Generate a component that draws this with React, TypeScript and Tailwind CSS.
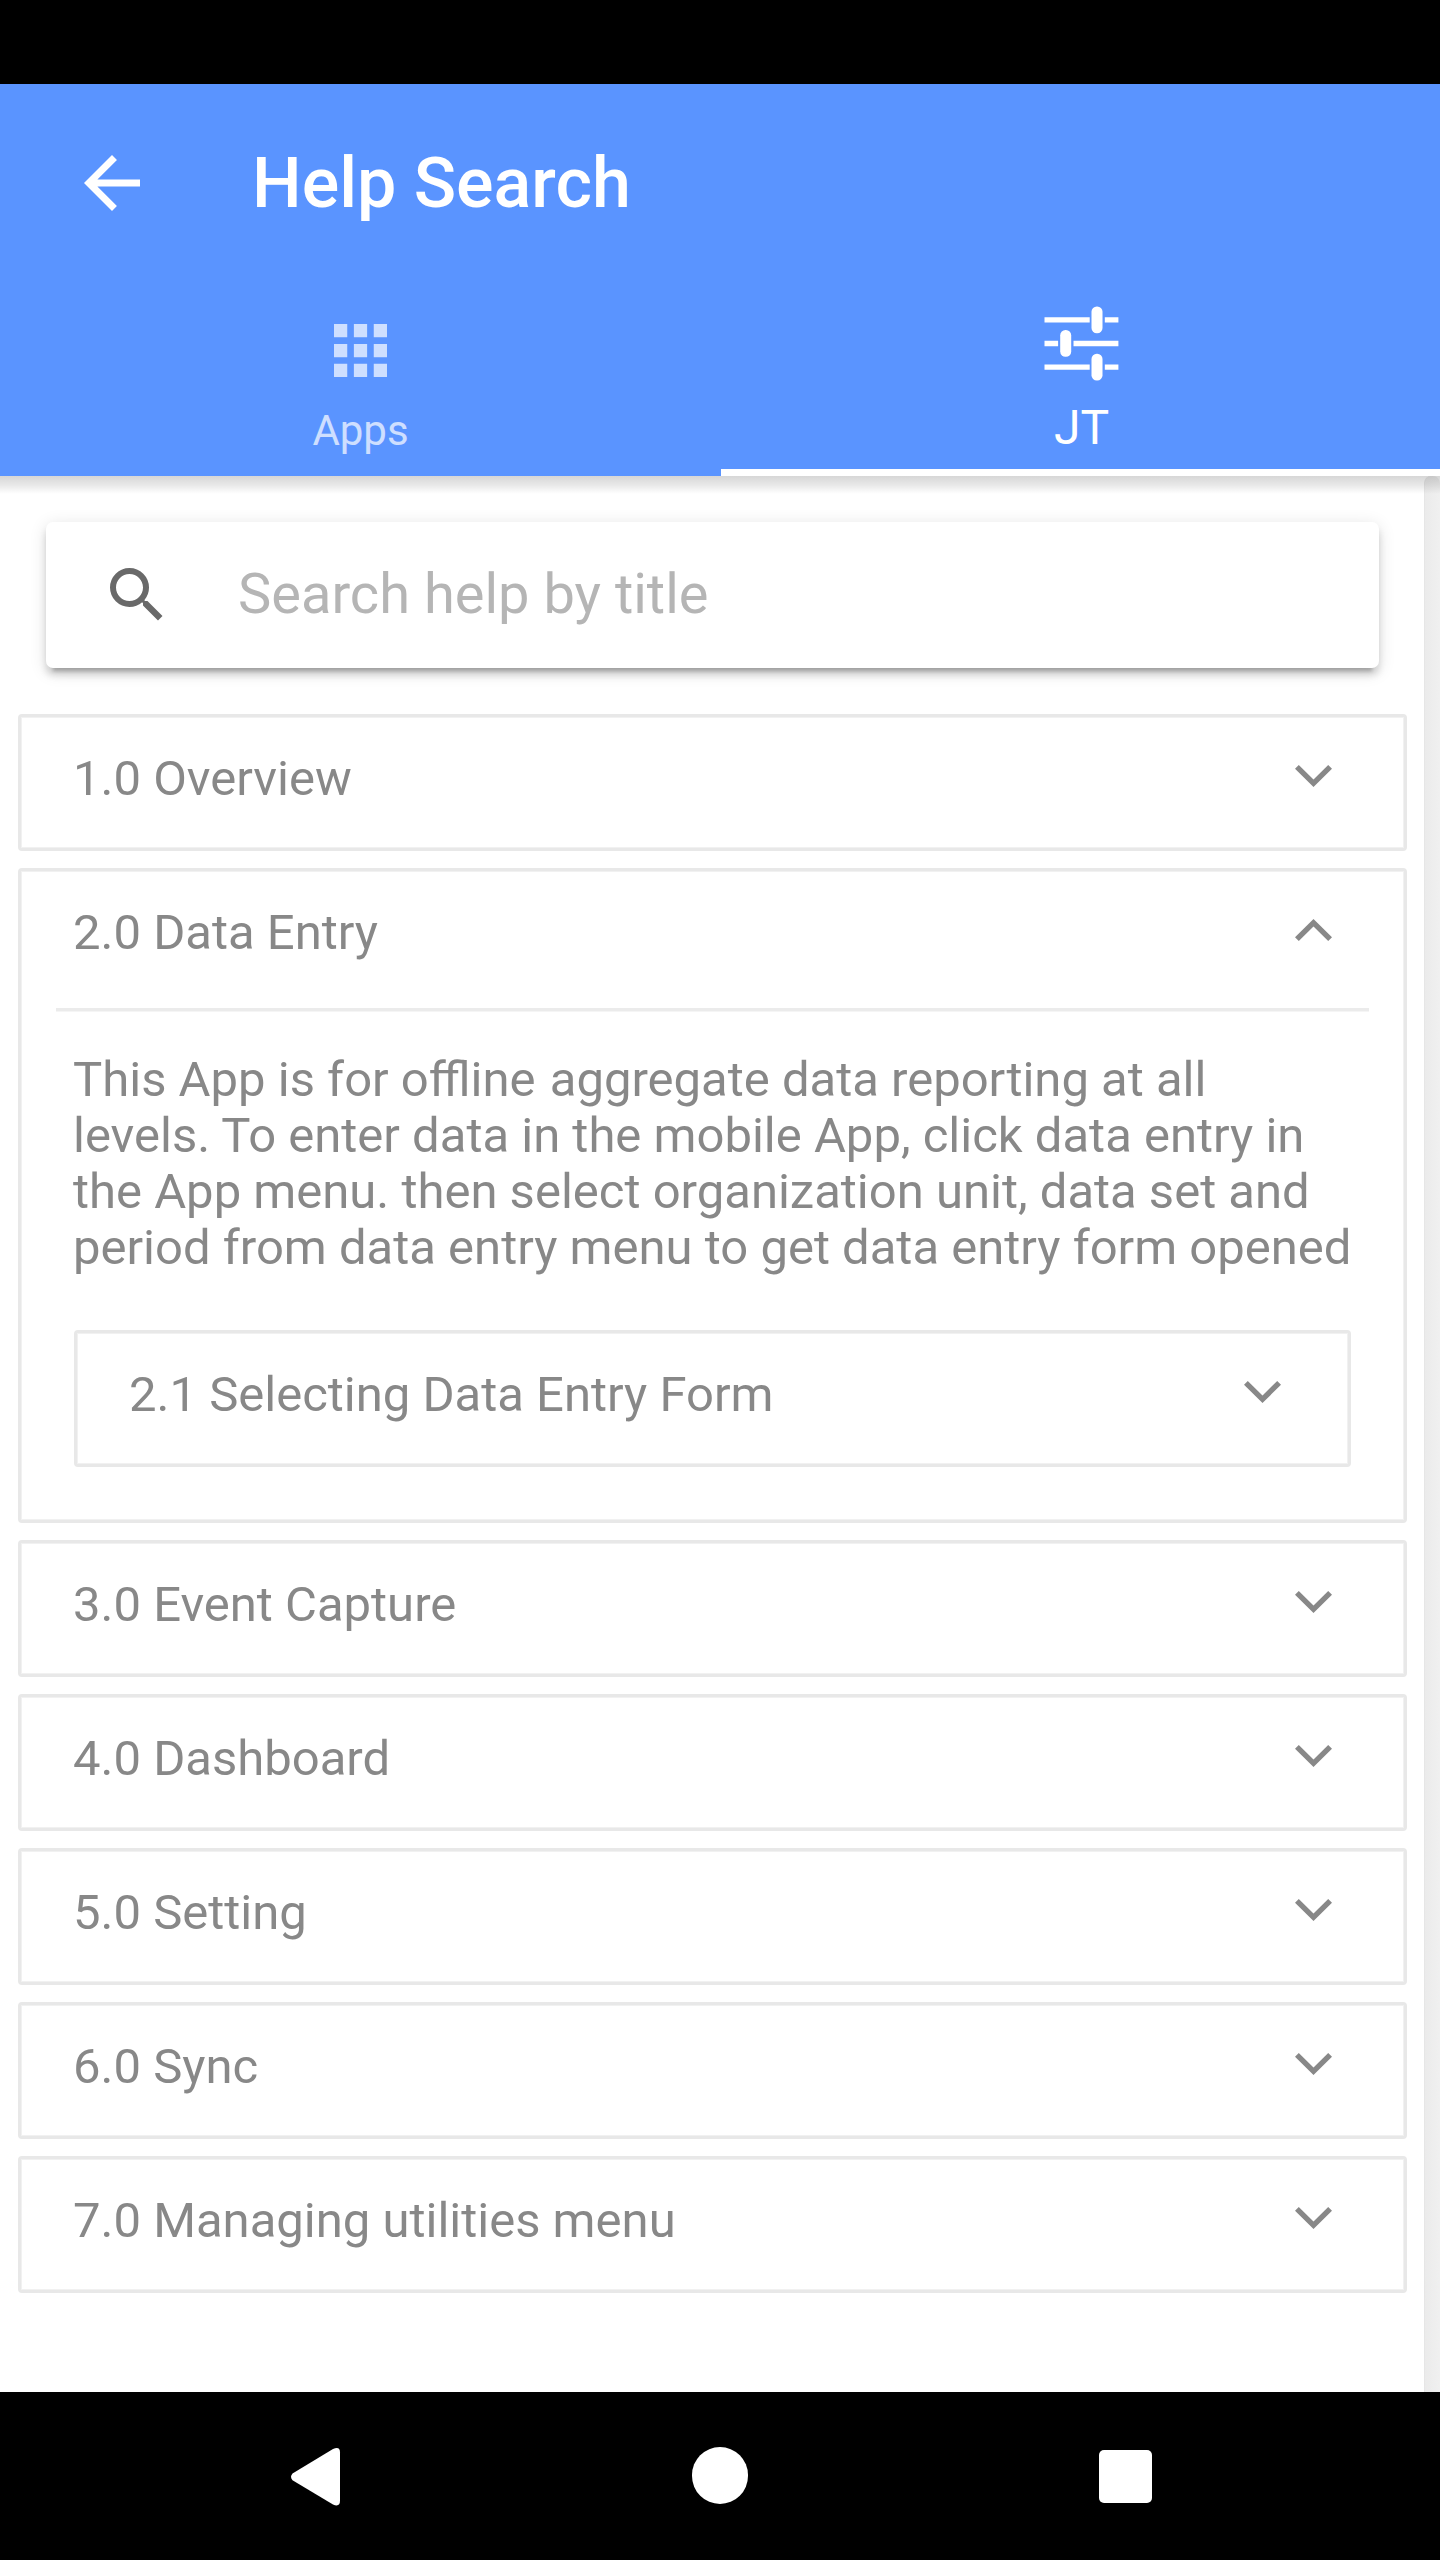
import type { ReactNode } from "react";

function Chevron({ open }: { open?: boolean }) {
  return (
    <svg className="mt-[48px] h-[22px] w-[37px] shrink-0" viewBox="0 0 37 22" fill="#888888">
      {open ? (
        <path d="M3.8 22 0 18.2 18.5 0 37 18.2 33.2 22 18.5 7.6Z" />
      ) : (
        <path d="M3.8 0 0 3.8 18.5 22 37 3.8 33.2 0 18.5 14.4Z" />
      )}
    </svg>
  );
}

function Card({ title, open, nested, children }: { title: string; open?: boolean; nested?: boolean; children?: ReactNode }) {
  return (
    <section className="rounded-[4px] border-[3px] border-[#e8e8e8] shadow-[inset_0_0_0_1px_#f1f1f1]">
      <div className={nested ? "flex h-[131px] justify-between pr-[67px] pl-[52px]" : "flex h-[131px] justify-between pr-[72px] pl-[52px]"}>
        <h2 className="mt-[32px] leading-[60px]">{title}</h2>
        <Chevron open={open} />
      </div>
      {children}
    </section>
  );
}

const laterSections = ["3.0 Event Capture", "4.0 Dashboard", "5.0 Setting", "6.0 Sync", "7.0 Managing utilities menu"];

export default function App() {
  return (
    <div className="flex h-[2560px] w-[1440px] flex-col overflow-hidden bg-white font-[Roboto,sans-serif]">
      <div className="h-[84px] shrink-0 bg-black" />
      <header className="flex h-[392px] shrink-0 flex-col bg-[#5a94ff] text-white">
        <div className="flex h-[197px] items-center pl-[70px]">
          <svg className="h-[84px] w-[84px]" viewBox="0 0 24 24" fill="currentColor">
            <path d="M20 11H7.83l5.59-5.59L12 4l-8 8 8 8 1.41-1.41L7.83 13H20v-2z" />
          </svg>
          <h1 className="ml-[98px] text-[70px] leading-[84px] font-medium">Help Search</h1>
        </div>
        <nav className="grid h-[195px] grid-cols-[721px_719px]">
          <div className="flex flex-col items-center pt-[43px] opacity-70">
            <svg className="h-[53px] w-[53px]" viewBox="0 0 16 16" fill="currentColor">
              <path d="M0 0h4v4H0zM6 0h4v4H6zM12 0h4v4h-4zM0 6h4v4H0zM6 6h4v4H6zM12 6h4v4h-4zM0 12h4v4H0zM6 12h4v4H6zM12 12h4v4h-4z" />
            </svg>
            <span className="mt-[29px] text-[42px] leading-[50px]">Apps</span>
          </div>
          <div className="flex flex-col items-center border-b-[7px] border-white pt-[25px] pl-[2px]">
            <svg className="h-[75px] w-[75px]" viewBox="0 0 75 75" fill="currentColor">
              <path d="M.5 11.2h45.2v5.4H.5zM60.8 11.2h13.6v5.4H60.8zM.5 34.8h13.6v5.4H.5zM29.5 34.8h44.9v5.4H29.5zM.5 58.4h45.2v5.4H.5zM60.8 58.4h13.6v5.4H60.8z" />
              <rect x="47.5" y=".4" width="11" height="26.8" rx="5.3" />
              <rect x="16.2" y="24" width="11" height="26.8" rx="5.3" />
              <rect x="47.5" y="47.7" width="11" height="26.8" rx="5.3" />
            </svg>
            <span className="mt-[18px] text-[48px] leading-[58px]">JT</span>
          </div>
        </nav>
      </header>

      <div className="relative flex h-[1916px] shrink-0 justify-between">
        <main className="ml-[18px] flex w-[1389px] flex-col text-[49px] text-[#888888]">
          <div className="mt-[46px] mr-[28px] ml-[28px] flex h-[146px] items-center rounded-[7px] bg-white pl-[55px] shadow-[0_7px_7px_rgba(0,0,0,0.14),0_10.5px_3.5px_-7px_rgba(0,0,0,0.2),0_3.5px_17.5px_rgba(0,0,0,0.12)]">
            <svg className="h-[72px] w-[72px]" viewBox="0 0 24 24" fill="#696969">
              <path d="M15.5 14h-.79l-.28-.27A6.471 6.471 0 0 0 16 9.5 6.5 6.5 0 1 0 9.5 16c1.61 0 3.09-.59 4.23-1.57l.27.28v.79l5 4.99L20.49 19l-4.99-5zm-6 0C7.01 14 5 11.99 5 9.5S7.01 5 9.5 5 14 7.01 14 9.5 11.99 14 9.5 14z" />
            </svg>
            <span className="mb-[2px] ml-[65px] text-[56px] leading-[66px] text-[#b5b5b5]">Search help by title</span>
          </div>
          <div className="mt-[46px] flex flex-col gap-[17px]">
            <Card title="1.0 Overview" />
            <Card title="2.0 Data Entry" open>
              <div className="mt-[6px] mr-[35px] ml-[35px] h-[4px] border-b border-[#f5f5f5] bg-[#ebebeb]" />
              <p className="mt-[40px] ml-[52px] leading-[56px] whitespace-nowrap">
                This App is for <span className="mr-[2px]">offline</span> aggregate data reporting at all
                <br />
                levels. To enter data in the mobile App, click data entry in
                <br />
                the App menu. then select organization unit, data set and
                <br />
                period from data entry menu to get data entry form opened
              </p>
              <div className="mt-[54px] mr-[53px] mb-[53px] ml-[53px]">
                <Card title="2.1 Selecting Data Entry Form" nested />
              </div>
            </Card>
            {laterSections.map((title) => (
              <Card key={title} title={title} />
            ))}
          </div>
        </main>
        <div className="h-full w-[16px] rounded-t-[7px] border-l border-[#e6e6e6] bg-gradient-to-r from-[#ebebeb] to-[#f0f0f0]" />
        <div className="absolute inset-x-0 top-0 h-[18px] bg-gradient-to-b from-black/16 via-black/9 to-transparent" />
      </div>

      <footer className="flex h-[168px] shrink-0 items-start bg-black pl-[290px]">
        <svg className="mt-[56px] h-[58px] w-[51px]" viewBox="0 0 51 58" fill="white">
          <path d="M2.5 25.5 43 1Q50 -2 50 4.5V52.5Q50 59.5 43 56.5L2.5 32.2Q-.5 28.8 2.5 25.5Z" />
        </svg>
        <div className="mt-[55px] ml-[351px] h-[57px] w-[56px] rounded-full bg-white" />
        <div className="mt-[58px] ml-[351px] h-[53px] w-[53px] rounded-[5px] bg-white" />
      </footer>
    </div>
  );
}
